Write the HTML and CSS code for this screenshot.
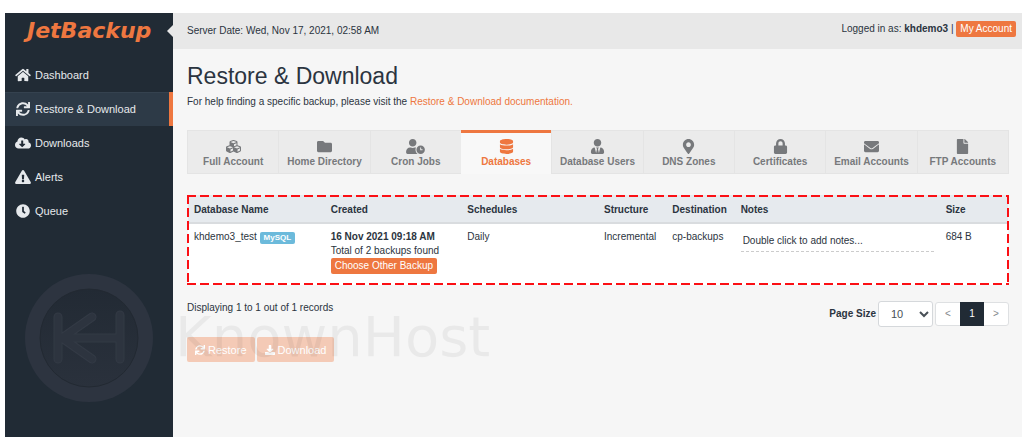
FILE: index.html
```html
<!DOCTYPE html>
<html lang="en">
<head>
  <meta charset="UTF-8">
  <meta name="viewport" content="width=device-width, initial-scale=1.0">
  <title>JetBackup - Restore &amp; Download</title>
  <link rel="stylesheet" href="styles.css">
</head>
<body>

<!-- icons -->
<svg class="sprite" aria-hidden="true">
  <symbol id="i-home" viewBox="0 0 576 512"><path d="M280.37 148.26L96 300.11V464a16 16 0 0 0 16 16l112.06-.29a16 16 0 0 0 15.92-16V368a16 16 0 0 1 16-16h64a16 16 0 0 1 16 16v95.64a16 16 0 0 0 16 16.05L464 480a16 16 0 0 0 16-16V300L295.67 148.26a12.19 12.19 0 0 0-15.3 0zM571.6 251.47L488 182.56V44.05a12 12 0 0 0-12-12h-56a12 12 0 0 0-12 12v72.61L318.47 43a48 48 0 0 0-61 0L4.34 251.47a12 12 0 0 0-1.6 16.9l25.5 31A12 12 0 0 0 45.15 301l235.22-193.74a12.19 12.19 0 0 1 15.3 0L530.9 301a12 12 0 0 0 16.9-1.6l25.5-31a12 12 0 0 0-1.7-16.93z"/></symbol>
  <symbol id="i-sync" viewBox="0 0 512 512"><path d="M440.65 12.57l4 82.77A247.16 247.16 0 0 0 255.83 8C134.73 8 33.91 94.92 12.29 209.82A12 12 0 0 0 24.09 224h49.05a12 12 0 0 0 11.67-9.26 175.91 175.91 0 0 1 317-56.94l-101.46-4.86a12 12 0 0 0-12.57 12v47.41a12 12 0 0 0 12 12H500a12 12 0 0 0 12-12V12a12 12 0 0 0-12-12h-47.37a12 12 0 0 0-11.98 12.57zM255.83 432a175.61 175.61 0 0 1-146-77.8l101.8 4.87a12 12 0 0 0 12.57-12v-47.4a12 12 0 0 0-12-12H12a12 12 0 0 0-12 12V500a12 12 0 0 0 12 12h47.35a12 12 0 0 0 12-12.6l-4.15-82.57A247.17 247.17 0 0 0 255.83 504c121.11 0 221.93-86.92 243.55-201.82a12 12 0 0 0-11.8-14.18h-49.05a12 12 0 0 0-11.67 9.26A175.86 175.86 0 0 1 255.83 432z"/></symbol>
  <symbol id="i-cloud" viewBox="0 0 640 512"><path d="M537.6 226.6c4.1-10.7 6.4-22.4 6.4-34.6 0-53-43-96-96-96-19.7 0-38.1 6-53.3 16.2C367 64.2 315.3 32 256 32c-88.4 0-160 71.6-160 160 0 2.7.1 5.4.2 8.1C40.2 219.8 0 273.2 0 336c0 79.5 64.5 144 144 144h368c70.7 0 128-57.3 128-128 0-61.9-44-113.6-102.4-125.4zm-132.9 88.7L299.3 420.7c-6.2 6.2-16.4 6.2-22.6 0L171.3 315.3c-10.1-10.1-2.9-27.3 11.3-27.3H248V176c0-8.8 7.2-16 16-16h48c8.8 0 16 7.2 16 16v112h65.4c14.2 0 21.4 17.2 11.3 27.3z"/></symbol>
  <symbol id="i-alert" viewBox="0 0 576 512"><path d="M569.517 440.013C587.975 472.007 564.806 512 527.94 512H48.054c-36.937 0-59.999-40.055-41.577-71.987L246.423 23.985c18.467-32.009 64.72-31.951 83.154 0l239.94 416.028zM288 354c-25.405 0-46 20.595-46 46s20.595 46 46 46 46-20.595 46-46-20.595-46-46-46zm-43.673-165.346l7.418 136c.347 6.364 5.609 11.346 11.982 11.346h48.546c6.373 0 11.635-4.982 11.982-11.346l7.418-136c.375-6.874-5.098-12.654-11.982-12.654h-63.383c-6.884 0-12.356 5.78-11.981 12.654z"/></symbol>
  <symbol id="i-clock" viewBox="0 0 512 512"><path d="M256,8C119,8,8,119,8,256S119,504,256,504,504,393,504,256,393,8,256,8Zm92.49,313h0l-20,25a16,16,0,0,1-22.49,2.5h0l-67-49.72a40,40,0,0,1-15-31.23V112a16,16,0,0,1,16-16h32a16,16,0,0,1,16,16V256l58,42.5A16,16,0,0,1,348.49,321Z"/></symbol>
  <symbol id="i-cubes" viewBox="0 0 512 512"><path d="M488.6 250.2L392 214V105.5c0-15-9.3-28.4-23.4-33.7l-100-37.5c-8.1-3.1-17.1-3.1-25.3 0l-100 37.5c-14.1 5.3-23.4 18.7-23.4 33.7V214l-96.6 36.2C9.3 255.5 0 268.9 0 283.9V394c0 13.6 7.7 26.1 19.9 32.2l100 50c10.1 5.1 22.1 5.1 32.2 0l103.9-52 103.9 52c10.1 5.1 22.1 5.1 32.2 0l100-50c12.2-6.1 19.9-18.6 19.9-32.2V283.9c0-15-9.3-28.4-23.4-33.7zM358 214.8l-85 31.9v-68.2l85-37v73.3zM154 104.1l102-38.2 102 38.2v.6l-102 41.4-102-41.4v-.6zm84 291.1l-85 42.5v-79.1l85-38.8v75.4zm0-112l-102 41.4-102-41.4v-.6l102-38.2 102 38.2v.6zm240 112l-85 42.5v-79.1l85-38.8v75.4zm0-112l-102 41.4-102-41.4v-.6l102-38.2 102 38.2v.6z"/></symbol>
  <symbol id="i-folder" viewBox="0 0 512 512"><path d="M464 128H272l-64-64H48C21.49 64 0 85.49 0 112v288c0 26.51 21.49 48 48 48h416c26.51 0 48-21.49 48-48V176c0-26.51-21.49-48-48-48z"/></symbol>
  <symbol id="i-user-clock" viewBox="0 0 640 512"><path d="M496 224c-79.6 0-144 64.4-144 144s64.4 144 144 144 144-64.4 144-144-64.4-144-144-144zm64 150.3c0 5.3-4.4 9.7-9.7 9.7h-60.6c-5.3 0-9.7-4.4-9.7-9.7v-76.6c0-5.3 4.4-9.7 9.7-9.7h12.6c5.3 0 9.7 4.4 9.7 9.7V352h38.3c5.3 0 9.7 4.4 9.7 9.7v12.6zM320 368c0-27.8 6.7-54.1 18.2-77.5-8-1.5-16.2-2.5-24.6-2.5h-16.7c-22.2 10.2-46.9 16-72.9 16s-50.6-5.8-72.9-16h-16.7C60.2 288 0 348.2 0 422.4V464c0 26.5 21.5 48 48 48h347.1c-45.3-31.9-75.1-84.5-75.1-144zm-96-112c70.7 0 128-57.3 128-128S294.7 0 224 0 96 57.3 96 128s57.3 128 128 128z"/></symbol>
  <symbol id="i-database" viewBox="0 0 448 512"><path d="M448 73.143v45.714C448 159.143 347.667 192 224 192S0 159.143 0 118.857V73.143C0 32.857 100.333 0 224 0s224 32.857 224 73.143zM448 176v102.857C448 319.143 347.667 352 224 352S0 319.143 0 278.857V176c48.125 33.143 136.208 48.572 224 48.572S399.874 209.143 448 176zm0 160v102.857C448 479.143 347.667 512 224 512S0 479.143 0 438.857V336c48.125 33.143 136.208 48.572 224 48.572S399.874 369.143 448 336z"/></symbol>
  <symbol id="i-user-tie" viewBox="0 0 448 512"><path d="M224 256c70.7 0 128-57.3 128-128S294.7 0 224 0 96 57.3 96 128s57.3 128 128 128zm95.8 32.6L272 480l-32-136 32-56h-96l32 56-32 136-47.8-191.4C56.9 292 0 350.3 0 422.4V464c0 26.5 21.5 48 48 48h352c26.5 0 48-21.5 48-48v-41.6c0-72.1-56.9-130.4-128.2-133.8z"/></symbol>
  <symbol id="i-marker" viewBox="0 0 384 512"><path d="M172.268 501.67C26.97 291.031 0 269.413 0 192 0 85.961 85.961 0 192 0s192 85.961 192 192c0 77.413-26.97 99.031-172.268 309.67-9.535 13.774-29.93 13.773-39.464 0zM192 272c44.183 0 80-35.817 80-80s-35.817-80-80-80-80 35.817-80 80 35.817 80 80 80z"/></symbol>
  <symbol id="i-lock" viewBox="0 0 448 512"><path d="M400 224h-24v-72C376 68.2 307.8 0 224 0S72 68.2 72 152v72H48c-26.5 0-48 21.5-48 48v192c0 26.5 21.5 48 48 48h352c26.5 0 48-21.5 48-48V272c0-26.5-21.5-48-48-48zm-104 0H152v-72c0-39.7 32.3-72 72-72s72 32.3 72 72v72z"/></symbol>
  <symbol id="i-envelope" viewBox="0 0 512 512"><path d="M502.3 190.8c3.9-3.1 9.7-.2 9.7 4.7V400c0 26.5-21.5 48-48 48H48c-26.5 0-48-21.5-48-48V195.6c0-5 5.7-7.8 9.7-4.7 22.4 17.4 52.1 39.5 154.1 113.6 21.1 15.4 56.7 47.8 92.2 47.6 35.7.3 72-32.8 92.3-47.6 102-74.1 131.6-96.3 154-113.7zM256 320c23.2.4 56.6-29.2 73.4-41.4 132.7-96.3 142.8-104.7 173.4-128.7 5.8-4.5 9.2-11.5 9.2-18.9v-19c0-26.5-21.5-48-48-48H48c-26.5 0-48 21.5-48 48v19c0 7.4 3.4 14.3 9.2 18.9 30.6 23.9 40.7 32.4 173.4 128.7 16.8 12.2 50.2 41.8 73.4 41.4z"/></symbol>
  <symbol id="i-file" viewBox="0 0 384 512"><path d="M224 136V0H24C10.7 0 0 10.7 0 24v464c0 13.3 10.7 24 24 24h336c13.3 0 24-10.7 24-24V160H248c-13.2 0-24-10.8-24-24zm160-14.1v6.1H256V0h6.1c6.4 0 12.5 2.5 17 7l97.9 98c4.5 4.5 7 10.6 7 16.9z"/></symbol>
  <symbol id="i-download" viewBox="0 0 512 512"><path d="M216 0h80c13.3 0 24 10.7 24 24v168h87.7c17.8 0 26.7 21.5 14.1 34.1L269.7 378.3c-7.5 7.5-19.8 7.5-27.3 0L90.1 226.1c-12.6-12.6-3.7-34.1 14.1-34.1H192V24c0-13.3 10.7-24 24-24zm296 376v112c0 13.3-10.7 24-24 24H24c-13.3 0-24-10.7-24-24V376c0-13.3 10.7-24 24-24h146.7l49 49c20.1 20.1 52.5 20.1 72.6 0l49-49H488c13.3 0 24 10.7 24 24z"/></symbol>
</svg>

<div class="app">
  <aside class="sidebar">
    <a class="logo" href="#">JetBackup</a>
    <nav class="menu">
      <a href="#"><svg><use href="#i-home"/></svg>Dashboard</a>
      <a href="#" class="active"><svg><use href="#i-sync"/></svg>Restore &amp; Download</a>
      <a href="#"><svg><use href="#i-cloud"/></svg>Downloads</a>
      <a href="#"><svg><use href="#i-alert"/></svg>Alerts</a>
      <a href="#"><svg><use href="#i-clock"/></svg>Queue</a>
    </nav>
    <svg class="seal" viewBox="0 0 130 130" aria-hidden="true">
      <defs>
        <linearGradient id="disc" x1="0" y1="0" x2="0" y2="1">
          <stop offset="0" stop-color="#222a34"/>
          <stop offset="1" stop-color="#2a313c"/>
        </linearGradient>
      </defs>
      <circle cx="65" cy="65" r="64" fill="#2d3440"/>
      <circle cx="65" cy="65" r="49" fill="url(#disc)" stroke="#222932" stroke-width="1"/>
      <g fill="none" stroke-linecap="round" stroke-linejoin="round">
        <path d="M34 44V86M34 65H96M96 42V86M38 65L68 44M38 65L68 86" stroke="#333a45" stroke-width="9"/>
        <path d="M34 44V86M34 65H96M96 42V86M38 65L68 44M38 65L68 86" stroke="#2d343f" stroke-width="7"/>
      </g>
    </svg>
  </aside>

  <div class="main">
    <header class="topbar">
      <span>Server Date: Wed, Nov 17, 2021, 02:58 AM</span>
      <div class="user">Logged in as: <strong>khdemo3</strong> | <a class="btn" href="#">My Account</a></div>
    </header>

    <main class="content">
      <h1>Restore &amp; Download</h1>
      <p class="help">For help finding a specific backup, please visit the <a href="#">Restore &amp; Download documentation.</a></p>

      <nav class="tabs">
        <a href="#"><svg><use href="#i-cubes"/></svg>Full Account</a>
        <a href="#"><svg><use href="#i-folder"/></svg>Home Directory</a>
        <a href="#"><svg><use href="#i-user-clock"/></svg>Cron Jobs</a>
        <a href="#" class="active"><svg><use href="#i-database"/></svg>Databases</a>
        <a href="#"><svg><use href="#i-user-tie"/></svg>Database Users</a>
        <a href="#"><svg><use href="#i-marker"/></svg>DNS Zones</a>
        <a href="#"><svg><use href="#i-lock"/></svg>Certificates</a>
        <a href="#"><svg><use href="#i-envelope"/></svg>Email Accounts</a>
        <a href="#"><svg><use href="#i-file"/></svg>FTP Accounts</a>
      </nav>

      <div class="table-wrap">
        <table>
          <colgroup>
            <col class="c2"><col class="c2"><col class="c2"><col class="c1"><col class="c1"><col class="c3"><col class="c1">
          </colgroup>
          <thead>
            <tr>
              <th>Database Name</th>
              <th>Created</th>
              <th>Schedules</th>
              <th>Structure</th>
              <th>Destination</th>
              <th>Notes</th>
              <th>Size</th>
            </tr>
          </thead>
          <tbody>
            <tr>
              <td>khdemo3_test <span class="badge">MySQL</span></td>
              <td>
                <strong>16 Nov 2021 09:18 AM</strong><br>
                Total of 2 backups found<br>
                <button type="button" class="btn">Choose Other Backup</button>
              </td>
              <td>Daily</td>
              <td>Incremental</td>
              <td>cp-backups</td>
              <td><input class="note" type="text" aria-label="Notes" value="Double click to add notes..." readonly></td>
              <td>684 B</td>
            </tr>
          </tbody>
        </table>
      </div>

      <div class="table-footer">
        <span>Displaying 1 to 1 out of 1 records</span>
        <div class="paging">
          <label for="pageSize">Page Size</label>
          <select id="pageSize">
            <option>10</option>
            <option>25</option>
            <option>50</option>
          </select>
          <div class="pages">
            <button type="button">&lt;</button>
            <button type="button" class="current">1</button>
            <button type="button">&gt;</button>
          </div>
        </div>
      </div>

      <div class="actions">
        <button type="button" disabled><svg><use href="#i-sync"/></svg>Restore</button>
        <button type="button" disabled><svg><use href="#i-download"/></svg>Download</button>
        <span class="wordmark">KnownHost</span>
      </div>
    </main>
  </div>
</div>

</body>
</html>
```
FILE: styles.css
```css
* {
  box-sizing: border-box;
}

body {
  margin: 0;
  background: #fff;
  color: #2b3440;
  font-family: "Liberation Sans", Arial, sans-serif;
  font-size: 10px;
  line-height: 14px;
}

a {
  color: #ee7740;
  text-decoration: none;
}

button, select, input {
  font: inherit;
}

svg {
  fill: currentColor;
}

.sprite {
  display: none;
}

.app {
  display: flex;
  min-height: 100vh;
  padding: 13px 2px 11px 5px;
}

/* sidebar */
.sidebar {
  display: flex;
  flex-direction: column;
  width: 168px;
  flex-shrink: 0;
  background: #212b35;
}

.logo {
  height: 45px;
  padding: 6px 0 0 22px;
  font-family: "DejaVu Sans", sans-serif;
  font-size: 22px;
  font-weight: bold;
  font-style: italic;
  line-height: 24px;
}

.menu a {
  display: flex;
  align-items: center;
  gap: 4px;
  height: 34px;
  padding-left: 10px;
  color: #e6e9ec;
  font-size: 11px;
}

.menu svg {
  width: 16px;
  height: 14px;
}

.menu .active {
  background: #2d3a47;
  box-shadow: inset 0 1px #35424f;
  border-right: 4px solid #ee7740;
}

.seal {
  width: 130px;
  height: 130px;
  margin: auto 0 34px 19px;
}

/* main */
.main {
  flex: 1;
  min-width: 0;
  background: #f6f6f6;
}

.topbar {
  position: relative;
  display: flex;
  align-items: center;
  justify-content: space-between;
  height: 36px;
  padding: 0 6px 0 14px;
  background: #e8e8e8;
}

/* notch cut into the sidebar */
.topbar::before {
  content: "";
  position: absolute;
  left: -6px;
  top: 12px;
  border: solid transparent;
  border-width: 6px 6px 6px 0;
  border-right-color: #e8e8e8;
}

.btn {
  display: inline-block;
  padding: 1px 4px;
  border: 0;
  border-radius: 2px;
  background: #ee7740;
  color: #fff;
}

.user {
  padding-bottom: 4px;
}

.content {
  padding: 14px 13px 12px 14px;
}

h1 {
  margin: 0;
  font-size: 23px;
  font-weight: normal;
  line-height: 26px;
}

.help {
  margin: 6px 0 21px;
}

/* tabs */
.tabs {
  display: flex;
}

.tabs a {
  flex: 1;
  display: flex;
  flex-direction: column;
  align-items: center;
  height: 44px;
  padding-top: 5px;
  background: #ebebeb;
  border: solid #e4e4e4;
  border-width: 1px 0 1px 1px;
  color: #77797c;
  font-weight: bold;
  white-space: nowrap;
}

.tabs a:last-child {
  border-right-width: 1px;
}

.tabs a svg {
  width: 19px;
  height: 15px;
  margin: 3px 0 1px;
}

.tabs .active {
  padding-top: 3px;
  background: #f8f8f8;
  border-width: 3px 0 0;
  border-color: #ee7740;
  color: #ee7740;
}

/* table with dashed outline */
.table-wrap {
  position: relative;
  margin-top: 21px;
  padding: 0 1px;
}

.table-wrap::after {
  content: "";
  position: absolute;
  inset: 0;
  pointer-events: none;
  background:
    repeating-linear-gradient(90deg, #fb0f14 0 9px, transparent 9px 13px) top / 100% 2px no-repeat,
    repeating-linear-gradient(90deg, #fb0f14 0 9px, transparent 9px 13px) bottom / 100% 2px no-repeat,
    repeating-linear-gradient(#fb0f14 0 9px, transparent 9px 13px) left / 2px 100% no-repeat,
    repeating-linear-gradient(#fb0f14 0 9px, transparent 9px 13px) right / 2px 100% no-repeat;
}

table {
  width: 100%;
  table-layout: fixed;
  border-collapse: collapse;
  background: #fff;
}

.c1 { width: 8.333%; }
.c2 { width: 16.667%; }
.c3 { width: 25%; }

th {
  padding: 8px 0 5px 6px;
  background: #e6eaee;
  border-bottom: 2px solid #d9dcdf;
  text-align: left;
}

td {
  padding: 6px 0 11px 6px;
  vertical-align: top;
  white-space: nowrap;
}

.badge {
  display: inline-block;
  padding: 0 4px;
  border-radius: 2px;
  background: #6cbadb;
  color: #fff;
  font-size: 8px;
  font-weight: bold;
  line-height: 12px;
}

.note {
  display: block;
  width: 97%;
  height: 22px;
  padding: 0 2px;
  border: 0;
  border-bottom: 1px dashed #ccc;
  background: none;
  color: inherit;
}

/* paging */
.table-footer {
  display: flex;
  justify-content: space-between;
  margin-top: 16px;
}

.paging {
  display: flex;
  align-items: center;
  gap: 2px;
}

.paging label {
  font-weight: bold;
}

.paging select {
  width: 55px;
  height: 26px;
  padding: 0 0 0 8px;
  border: 1px solid #d5d8db;
  border-radius: 3px;
  background-color: #fff;
  color: #495057;
  font-size: 11px;
}

.pages {
  display: flex;
  height: 24px;
  border: 1px solid #dee0e2;
  border-radius: 3px;
  background: #fff;
}

.pages button {
  width: 24px;
  padding: 0;
  border: 0;
  background: none;
  color: #85898d;
}

.pages .current {
  margin: -1px 0;
  background: #212b35;
  color: #fff;
}

/* bottom buttons */
.actions {
  position: relative;
  display: flex;
  gap: 2px;
  margin-top: 10px;
}

.actions button {
  display: flex;
  align-items: center;
  gap: 3px;
  height: 25px;
  padding: 0 8px;
  border: 0;
  border-radius: 2px;
  background: #f4cab6;
  color: #fff;
  font-size: 11px;
}

.actions svg {
  width: 10px;
  height: 10px;
}

.wordmark {
  position: absolute;
  left: -12px;
  top: -22px;
  color: rgba(0, 0, 0, 0.05);
  font-family: "DejaVu Sans", sans-serif;
  font-size: 56px;
  line-height: 44px;
  pointer-events: none;
}
```
